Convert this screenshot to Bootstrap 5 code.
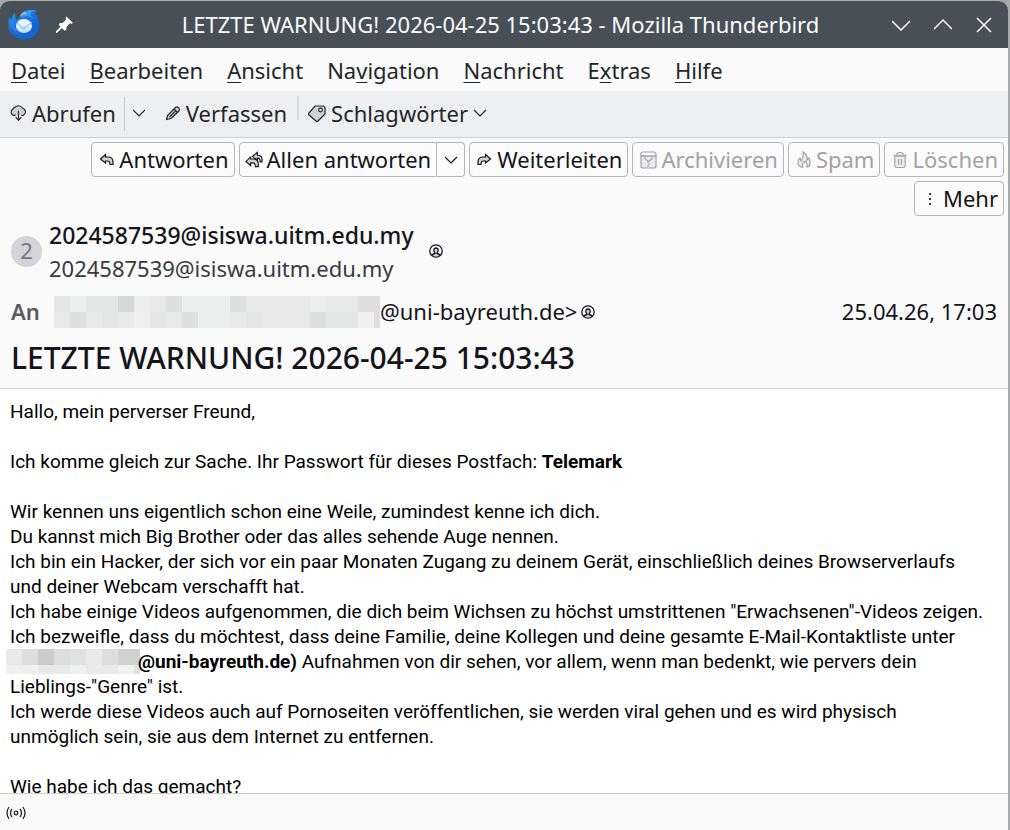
<!DOCTYPE html>
<html lang="de">
<head>
<meta charset="utf-8">
<meta name="viewport" content="width=device-width, initial-scale=1">
<title>LETZTE WARNUNG! 2026-04-25 15:03:43 - Mozilla Thunderbird</title>
<link href="https://cdn.jsdelivr.net/npm/bootstrap@5.3.0/dist/css/bootstrap.min.css" rel="stylesheet">
<style>
body { font-family: "Noto Sans", sans-serif; font-size: 22px; line-height: 30px; color: #232629; background: #a4a9aa; }
.app-window { margin: 1px 2px 0 0; height: calc(100vh - 1px); background: #fafafa; border-radius: 9px 9px 0 0; }
.titlebar { background: #475057; color: #fcfcfc; height: 47px; }
.titlebar h1 { font-size: 22px; line-height: 30px; font-weight: 400; padding: 0 0 2px 44px; }
.plain { background: none; border: 0; color: inherit; padding: 0; display: flex; align-items: center; }
.menubar { height: 43px; padding: 0 11px; gap: 24px; }
.menubar a { color: inherit; text-decoration: none; }
.menubar u { text-underline-offset: 3px; text-decoration-thickness: 1px; text-decoration-skip-ink: none; }
.toolbar { height: 47px; background: #eeeff1; border-bottom: 1px solid #cfcfd2; padding: 0 10px; }
.toolbar .plain { padding-bottom: 2px; gap: 5px; }
.toolbar .tall { width: 1px; height: 34px; background: #c4c6c9; }
.toolbar .short { width: 2px; height: 24px; background: #d4d6d9; align-self: flex-start; margin: 5px 9px 0 10px; }
.mail-head { border-bottom: 1px solid #cfcfd2; color: #15141a; height: 251px; }
.actions { padding: 4px 4px 0; gap: 4px; }
.act { height: 35px; border: 1px solid #b5b5b8; border-radius: 4px; background: #fbfbfb; color: #15141a; padding: 0 5px 2px 7px; gap: 4px; display: flex; align-items: center; }
.act svg { margin-top: 2px; }
.act:disabled { color: #a2a2a5; }
.act.drop-side { padding: 0 6px; border-left: 0; border-radius: 0 4px 4px 0; }
.act.main-side { border-radius: 4px 0 0 4px; padding-left: 5px; }
.avatar { width: 31px; height: 31px; background: #d3d3d8; color: #75757e; padding-bottom: 2px; }
.sender { padding: 2px 11px 0; gap: 7px; }
.from-name { font-weight: 500; font-size: 23px; line-height: 34px; }
.from-addr { color: #3a3a3f; line-height: 32px; }
.person { margin-left: 8px; }
.rcpt { padding: 0 11px; height: 55px; }
.rcpt span, .rcpt time { padding-bottom: 2px; }
.rcpt .lbl { color: #5b5b60; font-weight: 600; width: 43px; }
.subject { font-size: 30px; line-height: 38px; font-weight: 500; padding: 0 11px; }
.mail-body { background: #fff; color: #000; font-family: Roboto, sans-serif; font-size: 19px; line-height: 25px; padding: 10px 22px 0 10px; min-height: 0; }
.mail-body p { margin-bottom: 25px; }
.mosaic-line { margin: 0 -2px 0 -4px; vertical-align: top; }
.statusbar { height: 37px; border-top: 1px solid #cfcfd2; padding: 2px 6px 0; }
svg { flex: none; fill: none; stroke: currentColor; }
.soft { fill: #d0d1d4; }
</style>
</head>
<body>
<div class="app-window d-flex flex-column overflow-hidden">
  <header class="titlebar d-flex align-items-center flex-shrink-0 px-2">
    <svg width="32" height="32" viewBox="0 0 33 34" stroke="none">
      <defs>
        <linearGradient id="bird" x1="0" y1="0" x2="1" y2="1"><stop offset="0" stop-color="#1d9cf5"/><stop offset=".5" stop-color="#1670dc"/><stop offset="1" stop-color="#154fc0"/></linearGradient>
        <linearGradient id="paper" x1="0" y1="0" x2="0" y2="1"><stop offset="0" stop-color="#fff"/><stop offset="1" stop-color="#b4dcfb"/></linearGradient>
      </defs>
      <path d="M12 9C13 4 18 1 24 1c2 0 5 0 8 1-2 0-3 1-4 3 4 4 5 8 5 12 0 9-6 15-15 15C7 32 0 26 0 17c0-3 0-6 1-8l2 3c0-3 2-6 4-8 0 3 1 5 1 8z" fill="url(#bird)" stroke="none"/>
      <path d="M13 9C14 4 18 2 22 1h6c-2 1-4 2-5 5 1 2 3 3 4 5-4-4-9-4-14-2z" fill="#2f9df5" stroke="none"/>
      <path d="M13 6q2-3 5-4l-1 3-4 3z" fill="#b9a0f0" stroke="none"/>
      <path d="M1 14c1 10 9 16 18 14 5-1 9-4 12-10 1 9-5 13-13 14C7 32 1 25 1 14z" fill="#1466d2" stroke="none"/>
      <path d="M4 12c-1 5 0 8 4 11" stroke="#5b6fe8" stroke-width="1.500"/>
      <ellipse cx="16.500" cy="18" rx="8.500" ry="7.500" fill="url(#paper)" stroke="none"/>
      <path d="M9 15l7 6 9-7" stroke="#8cc4f2" stroke-width="1.200"/>
      <circle cx="18" cy="5" r=".8" fill="#fff" stroke="none"/>
    </svg>
    <button class="plain ms-3" aria-label="Anheften"><svg width="17" height="18" viewBox="0 0 18 18"><path d="M11 0l7 7-2 1-1-1-4 4 0 3-2 1L3 9l1-2 3 0 4-4-1-1z" fill="#fff" stroke="none"/><path d="M6 11L0 17" stroke="#fff" stroke-width="2"/></svg></button>
    <h1 class="flex-grow-1 text-center text-truncate mb-0">LETZTE WARNUNG! 2026-04-25 15:03:43 - Mozilla Thunderbird</h1>
    <div class="d-flex gap-4 ps-2 pe-2">
      <button class="plain" aria-label="Minimieren"><svg width="18" height="18" viewBox="0 0 18 18"><path d="M0 5l9 9 9-9" stroke-width="1.500"/></svg></button>
      <button class="plain" aria-label="Maximieren"><svg width="18" height="18" viewBox="0 0 18 18"><path d="M0 13l9-9 9 9" stroke-width="1.500"/></svg></button>
      <button class="plain" aria-label="Schließen"><svg width="16" height="16" viewBox="0 0 16 16"><path d="M1 1l14 14M15 1L1 15" stroke-width="1.500"/></svg></button>
    </div>
  </header>

  <nav class="menubar d-flex align-items-center flex-shrink-0" aria-label="Menü">
    <a href="#"><u>D</u>atei</a><a href="#"><u>B</u>earbeiten</a><a href="#"><u>A</u>nsicht</a><a href="#">Na<u>v</u>igation</a><a href="#"><u>N</u>achricht</a><a href="#">E<u>x</u>tras</a><a href="#"><u>H</u>ilfe</a>
  </nav>

  <div class="toolbar d-flex align-items-center flex-shrink-0" role="toolbar">
    <button class="plain"><svg width="17" height="18" viewBox="0 0 18 18" stroke-width="1.200"><path class="soft" d="M6 11.500H4A3.500 3.500 0 013 5 4 4 0 016 2.500q4-3 7.500 1.500a4 4 0 01.5 7.500h-2"/><path d="M9 6.500v10M6 13.500l3 3 3-3"/></svg>Abrufen</button>
    <span class="tall ms-2"></span>
    <button class="plain ms-2" aria-label="Abrufoptionen"><svg width="12" height="12" viewBox="0 0 12 12"><path d="M0 3l6 6 6-6" stroke-width="1.200"/></svg></button>
    <button class="plain ms-3 ps-1"><svg width="16" height="16" viewBox="0 0 16 16" stroke-width="1.200"><path class="soft" d="M1.500 14.500l1-4 8-8c2-2 5 1 3.500 3.500l-8 7.500z"/><path d="M9 4l3.500 3.500M10.500 6l-6 6"/></svg>Verfassen</button>
    <span class="short"></span>
    <button class="plain"><svg width="18" height="18" viewBox="0 0 18 18" stroke-width="1.200"><path class="soft" d="M1 9l6-7h8q2 0 2 2v6l-7 7q-1 1-2 0l-7-6q-1-1 0-2z"/><circle cx="12.500" cy="6" r="1.800" fill="#fff"/></svg>Schlagwörter<svg width="14" height="12" viewBox="0 0 14 12"><path d="M1 3l6 6 6-6" stroke-width="1.200"/></svg></button>
  </div>

  <section class="mail-head flex-shrink-0">
    <div class="actions d-flex flex-wrap justify-content-end">
      <button class="act"><svg width="16" height="16" viewBox="0 0 16 16" stroke-width="1.200"><path class="soft" d="M6.500 2.500L1.500 7l5 4V9h2q2.500 0 2.500 3.500h3V10q0-5-5-5H6.500z"/></svg>Antworten</button>
      <div class="d-flex">
        <button class="act main-side"><svg width="18" height="18" viewBox="0 0 19 18" stroke-width="1.200"><path class="soft" d="M13 1L8 5l2 2 3 2V7q3 0 3 4h2V8q0-4-5-4z"/><path class="soft" d="M6 6L1 10.500l5 4.500v-3h2q3 0 3 4h3v-3q0-5-5-5H6z"/></svg>Allen antworten</button>
        <button class="act drop-side" aria-label="Antwortoptionen"><svg width="15" height="12" viewBox="0 0 15 12"><path d="M2 2l6 6 6-6" stroke-width="1.200"/></svg></button>
      </div>
      <button class="act"><svg width="16" height="16" viewBox="0 0 16 16" stroke-width="1.200"><path class="soft" d="M8.500 2.500l5 4.500-5 4V9h-2Q4 9 4 12.500H1V10q0-5 5-5h2.500z"/></svg>Weiterleiten</button>
      <button class="act" disabled><svg width="17" height="18" viewBox="0 0 17 18" stroke-width="1.200"><path fill="#ebebed" d="M1 5V15q0 2 2 2h11q2 0 2-2V5z"/><path d="M3 1h11q2 0 2 2v2H1V3q0-2 2-2zM5 5v3l3 2h1l3-2V5M7 11h2M8 13h2M7 15h2"/></svg>Archivieren</button>
      <button class="act" disabled><svg width="16" height="18" viewBox="0 0 16 18" stroke-width="1.200"><path fill="#ebebed" d="M5 16Q2 15 2 11q0-3 2-4l1 3q3-4 2-9 5 3 4 8l2-2q3 8-2 9 1-3-2-6-4 3-2 6z"/></svg>Spam</button>
      <button class="act" disabled><svg width="16" height="18" viewBox="0 0 17 18" stroke-width="1.200"><path fill="#ebebed" d="M3 5v10q0 2 2 2h7q2 0 2-2V5z"/><path d="M1 4h15M5 4q0-3 3-3h1q3 0 3 3M7 8v6M10 8v6"/></svg>Löschen</button>
      <button class="act"><svg width="17" height="18" viewBox="0 0 17 18"><path d="M7 3h2v2H7zM7 8h2v2H7zM7 13h2v2H7z" fill="#3a3a3f" stroke="none"/></svg>Mehr</button>
    </div>

    <div class="sender d-flex align-items-center">
      <span class="avatar rounded-circle d-flex align-items-center justify-content-center flex-shrink-0">2</span>
      <div><div class="from-name">2024587539@isiswa.uitm.edu.my</div><div class="from-addr">2024587539@isiswa.uitm.edu.my</div></div>
      <svg class="person" width="14" height="14" viewBox="0 0 14 14" stroke-width="1.300"><circle cx="7" cy="7" r="6.200"/><path class="soft" d="M3 12q0-2 3-2.500V9q-2-2-1-4 2-2 4 0 1 2-1 4v.500q3 .5 3 2.500"/></svg>
    </div>

    <div class="rcpt d-flex align-items-center">
      <span class="lbl">An</span>
      <svg width="326" height="32" viewBox="0 0 326 32" shape-rendering="crispEdges" role="img" aria-label="Unkenntlich gemacht"><g stroke="none">
        <path fill="#e9e9e9" d="M0 0h326v32H0z"/>
        <path fill="#e4e5e5" d="M0 0h16v16H0zM32 0h32v16H32zM48 16h16v16H48zM96 16h16v16H96zM192 16h16v16h-16zM272 16h32v16h-32z"/>
        <path fill="#eceeee" d="M16 0h16v16H16zM80 0h16v16H80zM128 0h48v16h-48zM256 0h16v16h-16zM144 16h32v16h-32z"/>
        <path fill="#d6d8d8" d="M64 0h16v16H64z"/>
        <path fill="#dedfdf" d="M112 0h16v16h-16zM176 0h16v16h-16zM304 0h22v16h-22zM16 16h16v16H16zM128 16h16v16h-16zM256 16h16v16h-16zM320 16h6v16h-6z"/>
        <path fill="#f1f0ef" d="M80 16h16v16H80zM304 16h16v16h-16z"/></g>
      </svg>
      <span>@uni-bayreuth.de&gt;</span>
      <svg class="ms-1" width="14" height="14" viewBox="0 0 14 14" stroke-width="1.300"><circle cx="7" cy="7" r="6.200"/><path class="soft" d="M3 12q0-2 3-2.500V9q-2-2-1-4 2-2 4 0 1 2-1 4v.500q3 .5 3 2.500"/></svg>
      <time class="ms-auto">25.04.26, 17:03</time>
    </div>
    <h2 class="subject mb-0">LETZTE WARNUNG! 2026-04-25 15:03:43</h2>
  </section>

  <main class="mail-body flex-grow-1 overflow-hidden">
    <p>Hallo, mein perverser Freund,</p>
    <p>Ich komme gleich zur Sache. Ihr Passwort für dieses Postfach: <b>Telemark</b></p>
    <p>Wir kennen uns eigentlich schon eine Weile, zumindest kenne ich dich.<br>
    Du kannst mich Big Brother oder das alles sehende Auge nennen.<br>
    Ich bin ein Hacker, der sich vor ein paar Monaten Zugang zu deinem Gerät, einschließlich deines Browserverlaufs und deiner Webcam verschafft hat.<br>
    Ich habe einige Videos aufgenommen, die dich beim Wichsen zu höchst umstrittenen "Erwachsenen"-Videos zeigen.<br>
    Ich bezweifle, dass du möchtest, dass deine Familie, deine Kollegen und deine gesamte E-Mail-Kontaktliste unter <svg class="mosaic-line" width="134" height="25" viewBox="0 0 134 25" shape-rendering="crispEdges" role="img" aria-label="Unkenntlich gemacht"><g stroke="none">
        <path fill="#e9e9e9" d="M0 0h134v25H0z"/>
        <path fill="#dcdddd" d="M16 0h16v16H16zM48 0h16v16H48zM96 0h16v16H96z"/>
        <path fill="#cbcbcc" d="M32 0h16v16H32z"/>
        <path fill="#d0d1d1" d="M112 0h22v16h-22z"/>
        <path fill="#e0e1e2" d="M64 0h16v16H64zM128 16h6v9h-6z"/>
        <path fill="#f0f0f0" d="M0 16h32v9H0zM64 16h16v9H64zM112 16h16v9h-16z"/></g></svg><b>@uni-bayreuth.de)</b> Aufnahmen von dir sehen, vor allem, wenn man bedenkt, wie pervers dein Lieblings-"Genre" ist.<br>
    Ich werde diese Videos auch auf Pornoseiten veröffentlichen, sie werden viral gehen und es wird physisch unmöglich sein, sie aus dem Internet zu entfernen.</p>
    <p>Wie habe ich das gemacht?</p>
  </main>

  <footer class="statusbar d-flex align-items-center flex-shrink-0">
    <button class="plain" aria-label="Online-Status"><svg width="20" height="14" viewBox="0 0 20 14" stroke-width="1.300"><circle cx="10" cy="7" r="1.800"/><path d="M6 3q-3 4 0 8M14 3q3 4 0 8M3 1q-4 6 0 12M17 1q4 6 0 12"/></svg></button>
  </footer>
</div>
<script src="https://cdn.jsdelivr.net/npm/bootstrap@5.3.0/dist/js/bootstrap.bundle.min.js"></script>
</body>
</html>
